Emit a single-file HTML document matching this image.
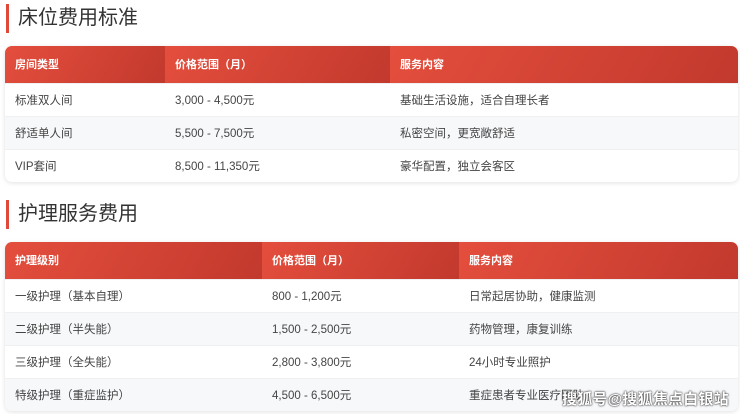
<!DOCTYPE html>
<html><head><meta charset="utf-8"><style>
*{margin:0;padding:0;box-sizing:border-box}
body{width:740px;height:414px;overflow:hidden;background:#fff;font-family:"Liberation Sans","Noto Sans CJK SC",sans-serif;position:relative}
.t{position:absolute;left:6px;border-left:3px solid #e0483a;padding-left:9px;font-size:20px;color:#333;height:29px;line-height:29px}
.tb{position:absolute;left:5px;width:733px;border-radius:7px;overflow:hidden;box-shadow:0 1px 5px rgba(0,0,0,.12);background:#fff}
table{border-collapse:collapse;width:100%;font-size:11.5px;color:#444}
th{height:37px;text-align:left;padding-left:10px;color:#fff;font-weight:bold;font-size:11px;background:linear-gradient(120deg,#e44e3d,#c2392d)}
td{height:33px;padding-left:10px;border-top:1px solid #eef0f2}
tr:nth-child(odd) td{background:#f7f8fa}
.wm{position:absolute;left:562px;top:388px;font-size:15px;color:#fff;font-weight:bold;text-shadow:0 0 2px #333,0 0 1px #000;letter-spacing:0.2px}
</style></head><body>
<div class="t" style="top:4px">床位费用标准</div>
<div class="tb" style="top:46px"><table>
<tr><th style="width:160px">房间类型</th><th style="width:225px">价格范围（月）</th><th>服务内容</th></tr>
<tr><td>标准双人间</td><td>3,000 - 4,500元</td><td>基础生活设施，适合自理长者</td></tr>
<tr><td>舒适单人间</td><td>5,500 - 7,500元</td><td>私密空间，更宽敞舒适</td></tr>
<tr><td>VIP套间</td><td>8,500 - 11,350元</td><td>豪华配置，独立会客区</td></tr>
</table></div>
<div class="t" style="top:200px">护理服务费用</div>
<div class="tb" style="top:242px"><table>
<tr><th style="width:257px">护理级别</th><th style="width:197px">价格范围（月）</th><th>服务内容</th></tr>
<tr><td>一级护理（基本自理）</td><td>800 - 1,200元</td><td>日常起居协助，健康监测</td></tr>
<tr><td>二级护理（半失能）</td><td>1,500 - 2,500元</td><td>药物管理，康复训练</td></tr>
<tr><td>三级护理（全失能）</td><td>2,800 - 3,800元</td><td>24小时专业照护</td></tr>
<tr><td>特级护理（重症监护）</td><td>4,500 - 6,500元</td><td>重症患者专业医疗团队</td></tr>
</table></div>
<div class="wm">搜狐号@搜狐焦点白银站</div>
</body></html>
